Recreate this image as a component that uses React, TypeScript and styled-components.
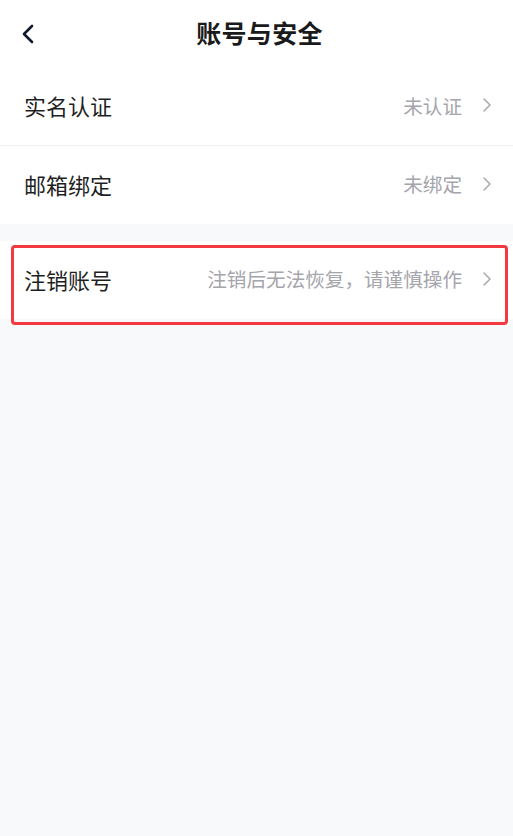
import React, { FC } from "react";
import styled, { createGlobalStyle } from "styled-components";

const GlobalStyle = createGlobalStyle`
  html, body {
    margin: 0;
    padding: 0;
    background: #f8f9fb;
  }
  body {
    font-family: "Noto Sans CJK SC", "Noto Sans", sans-serif;
  }
`;

const Page = styled.div`
  min-height: 836px;
  background: #f8f9fb;
`;

const Header = styled.div`
  height: 68px;
  box-sizing: border-box;
  padding-bottom: 5px;
  display: flex;
  align-items: center;
  justify-content: center;
  position: relative;
  background: #fff;
`;

const BackButton = styled.div`
  position: absolute;
  left: 16px;
  top: 20px;
  width: 24px;
  height: 28px;
  display: flex;
  align-items: center;
  justify-content: center;
`;

const Title = styled.h1`
  margin: 0;
  font-size: 25px;
  font-weight: 700;
  color: #1a1a1a;
  letter-spacing: 0.3px;
  padding-left: 6px;
`;

const Group = styled.div<{ $gap?: boolean }>`
  background: #fff;
  margin-top: ${(p) => (p.$gap ? "17px" : "0")};
`;

const Row = styled.div<{ $divider?: boolean; $flagged?: boolean }>`
  height: 78px;
  box-sizing: border-box;
  display: flex;
  align-items: center;
  padding: 0 21px 3px 24px;
  position: relative;
  border-bottom: ${(p) => (p.$divider ? "1px solid #f0f0f2" : "none")};

  ${(p) =>
    p.$flagged &&
    `
    &::after {
      content: "";
      position: absolute;
      left: 11px;
      right: 5px;
      top: 4px;
      bottom: -6px;
      border: 3px solid #f33a40;
      border-radius: 4px;
      pointer-events: none;
    }
  `}
`;

const Label = styled.span`
  font-size: 22px;
  color: #1f1f1f;
  flex: 1;
`;

const Value = styled.span`
  font-size: 19.6px;
  color: #a5a5ac;
  margin-right: 20px;
`;

const Chevron: FC = () => (
  <svg width="10" height="16" viewBox="0 0 10 16" fill="none">
    <path d="M2 2l6 6-6 6" stroke="#a8a8ae" strokeWidth="1.5" strokeLinecap="round" strokeLinejoin="round" />
  </svg>
);

const items = [
  { label: "实名认证", value: "未认证" },
  { label: "邮箱绑定", value: "未绑定" },
];

const App: FC = () => {
  return (
    <>
      <GlobalStyle />
      <Page>
        <Header>
          <BackButton>
            <svg width="14" height="22" viewBox="0 0 14 22" fill="none">
              <path d="M11 3L3 11l8 8" stroke="#0f1b2d" strokeWidth="2.6" strokeLinecap="round" strokeLinejoin="round" />
            </svg>
          </BackButton>
          <Title>账号与安全</Title>
        </Header>
        <Group>
          {items.map((item, index) => (
            <Row key={item.label} $divider={index === 0}>
              <Label>{item.label}</Label>
              <Value>{item.value}</Value>
              <Chevron />
            </Row>
          ))}
        </Group>
        <Group $gap>
          <Row $flagged>
            <Label>注销账号</Label>
            <Value>注销后无法恢复，请谨慎操作</Value>
            <Chevron />
          </Row>
        </Group>
      </Page>
    </>
  );
};

export default App;
